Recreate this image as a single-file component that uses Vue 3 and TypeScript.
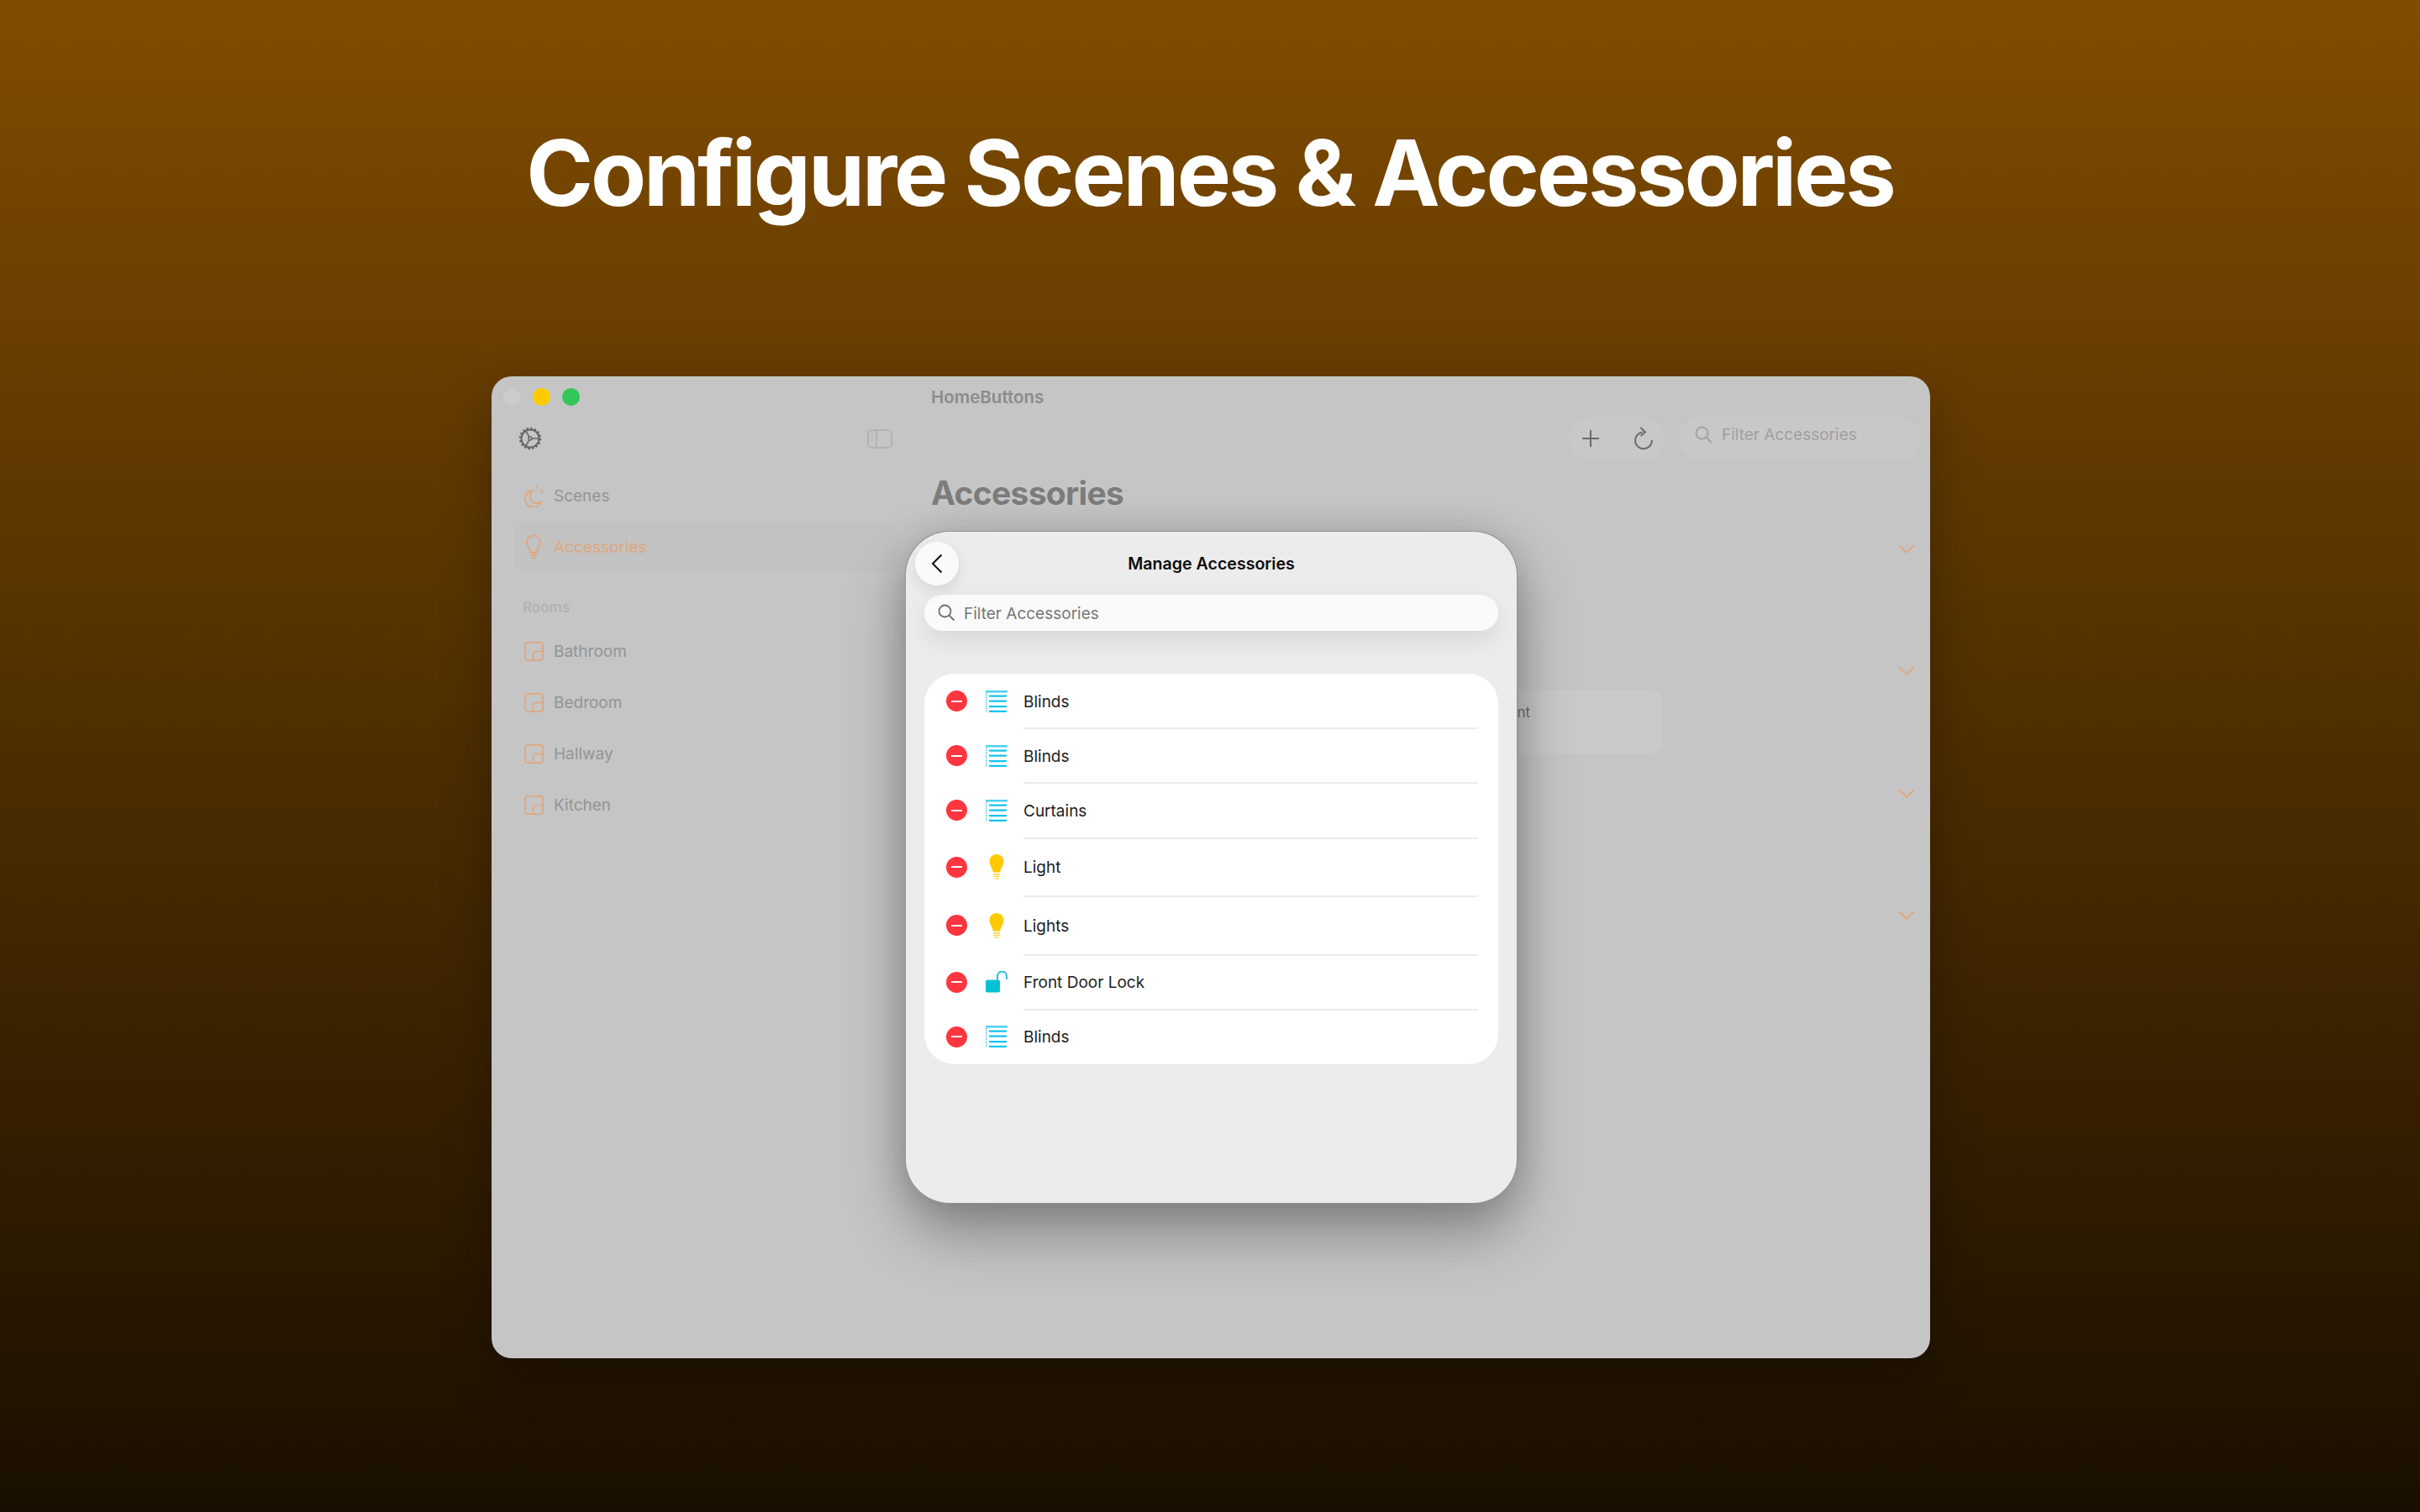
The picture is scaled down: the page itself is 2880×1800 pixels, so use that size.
<template>
  <div class="page">
    <h1 class="headline">Configure Scenes &amp; Accessories</h1>

    <div class="window">
      <div class="titlebar">
        <span class="light light-off"></span>
        <span class="light light-yellow"></span>
        <span class="light light-green"></span>
        <span class="app-title">HomeButtons</span>
      </div>

      <div class="columns">
        <aside class="sidebar">
          <div class="side-tools">
            <svg class="gear" width="28" height="28" viewBox="0 0 28 28" fill="none" stroke="#666" stroke-width="2">
              <circle cx="14" cy="14" r="10.5" />
              <circle cx="14" cy="14" r="12" stroke-width="2.4" stroke-dasharray="2.4 2.3" />
              <circle cx="14" cy="14" r="2" stroke-width="1.6" />
              <path d="M16 14h8.5M13 12.3 8.7 5M13 15.7 8.7 23" stroke-width="1.6" />
            </svg>
            <svg width="30" height="23" viewBox="0 0 30 23" fill="none" stroke="#b2b2b2" stroke-width="2">
              <rect x="1" y="1" width="28" height="21" rx="4" />
              <path d="M11 1v21" />
              <path d="M4 6h4M4 9.5h4M4 13h4" stroke-width="1.2" />
            </svg>
          </div>

          <nav class="nav">
            <div class="nav-item">
              <svg class="nav-icon" width="26" height="28" viewBox="0 0 26 28" fill="none" stroke="#dfa67e" stroke-width="1.8">
                <path d="M9.5 8A10 10 0 1 0 20 22 8.800 8.800 0 0 1 9.500 8Z" />
                <path d="M15 1l.6 2 2 .6-2 .6-.6 2-.6-2-2-.6 2-.6ZM21 5.500l.8 2.700 2.700.8-2.700.8-.8 2.700-.8-2.700-2.700-.8 2.700-.8Z" fill="#dfa67e" stroke="none" />
              </svg>
              <span>Scenes</span>
            </div>
            <div class="nav-item nav-selected">
              <svg class="nav-icon" width="26" height="30" viewBox="2 0 26 30" fill="none" stroke="#dfa67e" stroke-width="1.8">
                <path d="M9.5 22c0-4-4.5-6.5-4.5-12.500a8 8 0 0 1 16 0C21 15.500 16.500 18 16.500 22Z" />
                <path d="M9.500 25h7M10.500 28h5" />
              </svg>
              <span>Accessories</span>
            </div>
          </nav>

          <div class="rooms-label">Rooms</div>
          <div v-for="room in rooms" :key="room" class="room">
            <svg width="23" height="23" viewBox="0 0 24 24" fill="none" stroke="#dfa67e" stroke-width="1.8">
              <rect x="1" y="1" width="22" height="22" rx="3" />
              <path d="M11 23v-7a4 4 0 0 1 4-4h8" />
            </svg>
            <span>{{ room }}</span>
          </div>
        </aside>

        <main class="content">
          <div class="toolbar">
            <div class="tool-pill">
              <svg width="22" height="22" viewBox="0 0 22 22" fill="none" stroke="#6a6a6a" stroke-width="2">
                <path d="M11 1v20M1 11h20" />
              </svg>
              <svg width="24" height="28" viewBox="0 0 24 28" fill="none" stroke="#6a6a6a" stroke-width="2">
                <path d="M10.500 6.500a10 10 0 1 0 11.500 9.500" />
                <path d="M8.500 1l5.500 5.500-5.500 4.500" />
              </svg>
            </div>
            <div class="tool-search">
              <svg width="21" height="21" viewBox="0 0 21 21" fill="none" stroke="#a4a4a4" stroke-width="2">
                <circle cx="8.500" cy="8.500" r="7" />
                <path d="M13.500 13.500l6.500 6.500" />
              </svg>
              <span>Filter Accessories</span>
            </div>
          </div>

          <h2 class="content-title">Accessories</h2>

          <div class="sections">
            <div v-for="n in 4" :key="n" class="section">
              <svg class="chevron" width="20" height="12" viewBox="0 0 20 12" fill="none" stroke="#dfa67e" stroke-width="1.8">
                <path d="M1.500 1.500 10 10l8.500-8.500" />
              </svg>
              <div v-if="n === 2" class="tile"><span>nt</span></div>
            </div>
          </div>
        </main>
      </div>

      <section class="sheet">
        <div class="sheet-head">
          <button class="back" type="button">
            <svg width="14" height="24" viewBox="0 0 14 24" fill="none" stroke="#111" stroke-width="2">
              <path d="M12.500 1.500 2 12l10.500 10.500" />
            </svg>
          </button>
          <span class="sheet-title">Manage Accessories</span>
        </div>
        <div class="sheet-search">
          <svg width="21" height="21" viewBox="0 0 21 21" fill="none" stroke="#707070" stroke-width="1.800">
            <circle cx="8.500" cy="8.500" r="7" />
            <path d="M13.500 13.500l6 6" />
          </svg>
          <span class="search-text">Filter Accessories</span>
        </div>

        <ul class="list">
          <li v-for="(item, i) in accessories" :key="i" class="row" :class="'row-' + item.kind">
            <span class="remove"><i></i></span>
            <svg v-if="item.kind === 'blind'" class="kind" width="26" height="26" viewBox="0 0 26 26">
              <path d="M0 0h26v2.400H0z" fill="#4fd0f0" />
              <path d="M3.500 5.500h22l-1 2.200h-20zM3.500 11.500h22l-1 2.200h-20zM3.500 18h22l-1 2.200h-20zM3.500 23.800h22l-1 2.200h-20z" fill="#14c4ee" />
              <path d="M.7 3v23" stroke="#14c4ee" stroke-width="1.400" stroke-dasharray="1.200 1.300" fill="none" />
            </svg>
            <svg v-else-if="item.kind === 'light'" class="kind" width="26" height="30" viewBox="0 0 26 30">
              <path d="M13 0c5 0 8.500 3.700 8.500 8.300 0 5-3.500 8-4.300 13.200H8.800C8 16.300 4.500 13.300 4.500 8.300 4.500 3.700 8 0 13 0Z" fill="#ffcb00" />
              <path d="M8.800 23h8.400v1.400H8.800zM9.200 25.700h7.600v1.400H9.200zM10.500 28.300h5v1.200h-5z" fill="#ffd23c" />
            </svg>
            <svg v-else class="kind" width="26" height="26" viewBox="0 0 26 26">
              <rect x="0" y="10.500" width="17" height="15" rx="2" fill="#06c1d6" />
              <path d="M14 11V6a5 5 0 0 1 11 0v4" fill="none" stroke="#2bc1d8" stroke-width="2" />
            </svg>
            <span class="row-name">{{ item.name }}</span>
          </li>
        </ul>
      </section>
    </div>
  </div>
</template>

<script setup lang="ts">
type Kind = "blind" | "light" | "lock";

const rooms = ["Bathroom", "Bedroom", "Hallway", "Kitchen"];

const accessories: { name: string; kind: Kind }[] = [
  { name: "Blinds", kind: "blind" },
  { name: "Blinds", kind: "blind" },
  { name: "Curtains", kind: "blind" },
  { name: "Light", kind: "light" },
  { name: "Lights", kind: "light" },
  { name: "Front Door Lock", kind: "lock" },
  { name: "Blinds", kind: "blind" },
];
</script>

<style>
html,
body {
  margin: 0;
  background: #1a0f00;
}
</style>

<style scoped>
.page {
  width: 2880px;
  height: 1800px;
  overflow: hidden;
  display: flex;
  flex-direction: column;
  align-items: center;
  background: linear-gradient(#804c00, #1a0f00);
  font-family: Inter, "Liberation Sans", sans-serif;
}
.headline {
  margin: 141px 0 0;
  height: 307px;
  font-size: 108px;
  line-height: 130px;
  letter-spacing: -3.2px;
  font-weight: 700;
  color: #fff;
}
.window {
  position: relative;
  width: 1712px;
  height: 1169px;
  flex: none;
  margin-left: 2px;
  border-radius: 24px;
  background: #c5c5c5;
  box-shadow: 0 20px 60px rgba(0, 0, 0, 0.3);
}
.titlebar {
  height: 48px;
  display: flex;
  align-items: center;
  padding-left: 14px;
  gap: 14px;
}
.light {
  width: 21px;
  height: 21px;
  border-radius: 50%;
  flex: none;
}
.light-off {
  background: #cbcbcb;
}
.light-yellow {
  background: #ffcb00;
}
.light-green {
  background: #32c758;
}
.app-title {
  margin-left: 404px;
  font-size: 20.500px;
  font-weight: 600;
  color: #8c8c8c;
}
.columns {
  display: flex;
}
.sidebar {
  width: 523px;
  flex: none;
  box-sizing: border-box;
  padding-left: 28px;
}
.side-tools {
  display: flex;
  align-items: center;
  justify-content: space-between;
  width: 445px;
  margin: 12px 0 0 4px;
  height: 28px;
}
.nav {
  margin-top: 24px;
}
.nav-item {
  width: 455px;
  height: 60px;
  display: flex;
  align-items: center;
  gap: 9px;
  padding-left: 11px;
  box-sizing: border-box;
  font-size: 19px;
  color: #949494;
  border-radius: 12px;
}
.nav-selected {
  margin-top: 1px;
  background: #c2c2c2;
  color: #dfa67e;
}
.rooms-label {
  margin: 32px 0 0 9px;
  font-size: 17px;
  line-height: 20px;
  font-weight: 600;
  color: #b2b2b2;
}
.room {
  height: 61px;
  display: flex;
  align-items: center;
  gap: 12px;
  padding-left: 11px;
  font-size: 19px;
  color: #949494;
}
.rooms-label + .room {
  margin-top: 12px;
}
.content {
  flex: 1;
  min-width: 0;
  padding-right: 10px;
}
.toolbar {
  display: flex;
  justify-content: flex-end;
  gap: 15px;
  margin-top: 1px;
}
.tool-pill {
  width: 115px;
  height: 50px;
  display: flex;
  align-items: center;
  justify-content: space-between;
  box-sizing: border-box;
  padding: 0 14px 0 15px;
  border-radius: 25px;
  background: #c8c8c8;
}
.tool-search {
  width: 290px;
  height: 50px;
  box-sizing: border-box;
  padding: 0 0 10px 20px;
  display: flex;
  align-items: center;
  gap: 11px;
  border-radius: 25px;
  background: #c8c8c8;
  font-size: 19px;
  color: #a0a0a0;
}
.content-title {
  margin: 16px 0 0;
  font-size: 39px;
  line-height: 48px;
  letter-spacing: -0.700px;
  font-weight: 700;
  color: #7c7c7c;
}
.sections {
  margin-top: 37px;
}
.section {
  position: relative;
  height: 145.300px;
  display: flex;
  flex-direction: column;
  align-items: flex-end;
}
.chevron {
  flex: none;
  margin: 0 8px 0 0;
}
.tile {
  align-self: flex-start;
  width: 870px;
  height: 75px;
  margin-top: 17px;
  box-sizing: border-box;
  padding: 16px 157px 0 0;
  text-align: right;
  border-radius: 14px;
  background: #cacaca;
  font-size: 17px;
  color: #6e6e6e;
}
.sheet {
  position: absolute;
  left: 493px;
  top: 185px;
  width: 727px;
  height: 799px;
  box-sizing: border-box;
  padding: 12px 22px 0;
  border-radius: 52px;
  background: #ececec;
  box-shadow: 0 0 0 1px #939393, 0 34px 70px rgba(0, 0, 0, 0.34), 0 0 40px rgba(0, 0, 0, 0.12);
}
.sheet-head {
  position: relative;
  height: 52px;
  display: flex;
  align-items: center;
  justify-content: center;
}
.back {
  position: absolute;
  left: -11px;
  top: 0;
  width: 52px;
  height: 52px;
  padding: 0;
  border: 0;
  border-radius: 50%;
  background: #fafafa;
  display: flex;
  align-items: center;
  justify-content: center;
  box-shadow: 0 6px 18px rgba(0, 0, 0, 0.1);
}
.sheet-title {
  font-size: 19.600px;
  font-weight: 600;
  color: #0c0c0c;
}
.sheet-search {
  height: 43px;
  margin-top: 11px;
  padding-left: 16px;
  display: flex;
  align-items: center;
  gap: 10px;
  border-radius: 22px;
  background: #fafafa;
  font-size: 19px;
  color: #777;
  box-shadow: 0 12px 30px rgba(0, 0, 0, 0.09);
}
.search-text {
  padding-top: 1px;
}
.list {
  margin: 51px 0 0;
  padding: 0;
  list-style: none;
  border-radius: 36px;
  background: #fff;
  overflow: hidden;
}
.row {
  position: relative;
  display: flex;
  align-items: center;
  box-sizing: border-box;
  height: 65.200px;
  padding-left: 26px;
  color: #1c1c1c;
  font-size: 19px;
}
.row-light {
  height: 69.500px;
}
.row + .row::before {
  content: "";
  position: absolute;
  left: 118px;
  right: 24px;
  top: -1px;
  height: 2px;
  background: #ececec;
}
.remove {
  width: 25px;
  height: 25px;
  flex: none;
  border-radius: 50%;
  background: #ff3540;
  display: flex;
  align-items: center;
  justify-content: center;
}
.remove i {
  display: block;
  width: 13px;
  height: 2px;
  background: #fff;
}
.kind {
  margin-left: 22px;
  flex: none;
}
.row-name {
  margin-left: 19px;
  padding-top: 1px;
}
</style>
